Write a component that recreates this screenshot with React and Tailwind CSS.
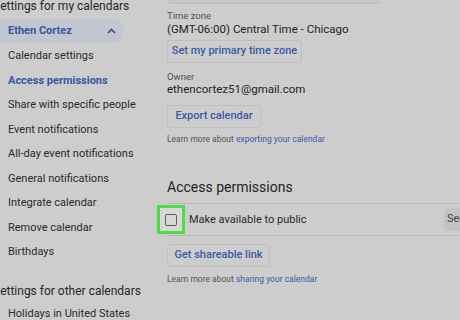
import React from 'react';

const sideItems = [
  { label: 'Calendar settings' },
  { label: 'Access permissions', active: true },
  { label: 'Share with specific people' },
  { label: 'Event notifications' },
  { label: 'All-day event notifications' },
  { label: 'General notifications' },
  { label: 'Integrate calendar' },
  { label: 'Remove calendar' },
  { label: 'Birthdays' },
];

function OutlineButton({ children, width }) {
  return (
    <button
      className={`h-[23px] ${width} rounded-[3px] border border-[#bfbfbf] bg-[#cdcdcd] text-[11px] font-medium text-[#3a5ba6] flex items-center justify-center`}
    >
      {children}
    </button>
  );
}

export default function App() {
  return (
    <div
      className="w-[460px] h-[320px] overflow-hidden bg-[#cdcdcd] flex text-[#242424]"
      style={{ fontFamily: 'Roboto, "Noto Sans", sans-serif' }}
    >
      {/* Sidebar */}
      <aside className="w-[167px] shrink-0 flex flex-col">
        <div className="shrink-0 -ml-[7px] text-[12px] leading-[13px] text-[#262626] whitespace-nowrap">Settings for my calendars</div>
        <div className="shrink-0 mt-[6px] h-[24px] w-[124px] rounded-r-full bg-[#c2c6cf] flex items-center justify-between pl-[8px] pr-[8px]">
          <span className="text-[11px] font-bold text-[#3557a4]">Ethen Cortez</span>
          <svg width="9" height="6" viewBox="0 0 9 6" fill="none">
            <path d="M1 5 L4.5 1.5 L8 5" stroke="#3a4f7e" strokeWidth="1.6" />
          </svg>
        </div>
        <div className="shrink-0 h-[1px]" />
        {sideItems.map((item) => (
          <div
            key={item.label}
            className={`shrink-0 h-[24.5px] flex items-center pl-[8px] text-[11px] ${item.active ? 'font-bold text-[#3557a4]' : 'text-[#2a2a2a]'}`}
          >
            {item.label}
          </div>
        ))}
        <div className="shrink-0 mt-[19px] -ml-[7px] text-[12px] leading-[14px] text-[#262626] whitespace-nowrap">Settings for other calendars</div>
        <div className="shrink-0 mt-[5px] h-[24px] flex items-center pl-[8px] text-[11px] text-[#2a2a2a]">Holidays in United States</div>
      </aside>

      {/* Main */}
      <main className="flex-1 min-w-0 flex flex-col">
        <div className="shrink-0 h-[4px] w-[214px] rounded-b-[3px] bg-[#c4c4c4] border-b border-[#bdbdbd]" />
        <div className="mt-[6px] text-[9.5px] leading-[12px] text-[#505050]">Time zone</div>
        <div className="text-[11.5px] leading-[14px]">(GMT-06:00) Central Time - Chicago</div>
        <div className="mt-[4px]">
          <OutlineButton width="w-[135px]">Set my primary time zone</OutlineButton>
        </div>
        <div className="mt-[8px] text-[9.5px] leading-[12px] text-[#505050]">Owner</div>
        <div className="text-[11.5px] leading-[12px]">ethencortez51@gmail.com</div>
        <div className="mt-[10px]">
          <OutlineButton width="w-[94px]">Export calendar</OutlineButton>
        </div>
        <div className="mt-[5px] text-[8.5px] leading-[12px] text-[#555]">
          Learn more about <span className="text-[#3a5ba6]">exporting your calendar</span>
        </div>

        <h2 className="mt-[33px] text-[14px] leading-[18px] text-[#222]">Access permissions</h2>
        <div className="mt-[7px] border-t border-[#b9b9b9] w-[400px]" />
        <div className="shrink-0 h-[32px] w-[400px] border-b border-[#b9b9b9] flex items-center">
          <div className="-ml-[10px] w-[28px] h-[29px] border-[3px] border-[#4fdc4a] bg-[#d8d8d8] flex items-center justify-center shrink-0">
            <div className="w-[12px] h-[12px] rounded-[2px] border-[1.5px] border-[#5e5e5e]" />
          </div>
          <span className="ml-[4px] pt-[2px] w-[255px] shrink-0 text-[11px] text-[#2a2a2a]">Make available to public</span>
          <button className="h-[23px] px-[3px] rounded-[3px] bg-[#c3c3c3] text-[11px] text-[#444] whitespace-nowrap">
            See details
          </button>
        </div>
        <div className="mt-[8px]">
          <OutlineButton width="w-[103px]">Get shareable link</OutlineButton>
        </div>
        <div className="mt-[6px] text-[8.5px] leading-[12px] text-[#555]">
          Learn more about <span className="text-[#3a5ba6]">sharing your calendar</span>
        </div>
      </main>
    </div>
  );
}
